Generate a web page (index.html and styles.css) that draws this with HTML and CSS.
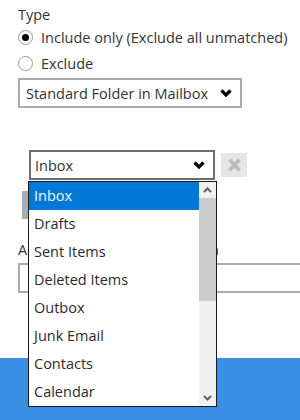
FILE: index.html
```html
<!DOCTYPE html>
<html>
<head>
<meta charset="utf-8">
<link rel="stylesheet" href="styles.css">
</head>
<body>
<div class="page">
  <div class="label">Type</div>
  <div class="radio-row"><span class="radio checked"></span><span>Include only (Exclude all unmatched)</span></div>
  <div class="radio-row"><span class="radio"></span><span>Exclude</span></div>
  <div class="select wide">
    <span>Standard Folder in Mailbox</span>
    <svg class="chev" width="12" height="8" viewBox="0 0 12 8"><polyline points="1.5,1.5 6,6 10.5,1.5" fill="none" stroke="#000" stroke-width="3.2"/></svg>
  </div>
  <div class="folder-row">
    <div class="select folder">
      <span>Inbox</span>
      <svg class="chev" width="12" height="8" viewBox="0 0 12 8"><polyline points="1.5,1.5 6,6 10.5,1.5" fill="none" stroke="#000" stroke-width="3.2"/></svg>
    </div>
    <div class="xbtn">
      <svg width="13" height="14" viewBox="0 0 13 14"><path d="M1.5 1.5 L11.5 12.5 M11.5 1.5 L1.5 12.5" stroke="#bcbcbc" stroke-width="3.8"/></svg>
    </div>
  </div>
  <div class="addbtn"></div>
  <div class="label name-label">Add another folder or pattern</div>
  <div class="input"></div>
</div>
<div class="footer"></div>

<div class="dropdown">
  <ul class="options">
    <li class="selected">Inbox</li>
    <li>Drafts</li>
    <li>Sent Items</li>
    <li>Deleted Items</li>
    <li>Outbox</li>
    <li>Junk Email</li>
    <li>Contacts</li>
    <li>Calendar</li>
  </ul>
  <div class="scrollbar">
    <div class="arrow"><svg width="9" height="6" viewBox="0 0 9 6"><polyline points="1,5 4.5,1.5 8,5" fill="none" stroke="#606060" stroke-width="2"/></svg></div>
    <div class="track"><div class="thumb"></div></div>
    <div class="arrow"><svg width="9" height="6" viewBox="0 0 9 6"><polyline points="1,1 4.5,4.5 8,1" fill="none" stroke="#606060" stroke-width="2"/></svg></div>
  </div>
</div>
</body>
</html>
```
FILE: styles.css
```css
html, body {
  margin: 0;
  padding: 0;
  background: #fff;
}
body {
  width: 300px;
  height: 420px;
  overflow: hidden;
  position: relative;
  font-family: "Open Sans", sans-serif;
  font-size: 14.5px;
  color: #333;
}
.page {
  padding: 5px 0 0 18px;
  height: 353px;
}
.label {
  line-height: 19px;
}
.radio-row {
  display: flex;
  align-items: center;
  gap: 8px;
  height: 26px;
}
.radio {
  width: 13px;
  height: 13px;
  border: 1px solid #999;
  border-radius: 50%;
  display: flex;
  align-items: center;
  justify-content: center;
  box-sizing: content-box;
}
.radio.checked::after {
  content: "";
  width: 7px;
  height: 7px;
  border-radius: 50%;
  background: #000;
}
.select {
  display: flex;
  align-items: center;
  justify-content: space-between;
  box-sizing: border-box;
  background: #fff;
}
.select.wide {
  margin-top: 2px;
  width: 224px;
  height: 30px;
  border: 2px solid #acacac;
  padding: 0 8px 0 6px;
}
.folder-row {
  display: flex;
  align-items: center;
  gap: 6px;
  margin: 42px 0 0 11px;
}
.select.folder {
  width: 186px;
  height: 30px;
  border: 2px solid #6d6d6d;
  padding: 0 8px 0 4px;
}
.xbtn {
  width: 26px;
  height: 24px;
  background: #e6e6e6;
  display: flex;
  align-items: center;
  justify-content: center;
}
.addbtn {
  margin: 11px 0 0 4px;
  width: 80px;
  height: 28px;
  background: #adadad;
}
.name-label {
  margin-top: 21px;
}
.input {
  margin-top: 4px;
  height: 30px;
  border: 2px solid #acacac;
  border-right: none;
  box-sizing: border-box;
}
.footer {
  height: 62px;
  background: #3a8fe4;
}
.dropdown {
  position: absolute;
  left: 28px;
  top: 181px;
  width: 189px;
  height: 226px;
  box-sizing: border-box;
  border: 1px solid #1a1a1a;
  background: #fff;
  display: flex;
}
.options {
  list-style: none;
  margin: 0;
  padding: 0;
  flex: 1;
}
.options li {
  height: 28px;
  line-height: 28px;
  padding-left: 5px;
  color: #2b2b2b;
}
.options li.selected {
  background: #0078d7;
  color: #f4f8ff;
}
.scrollbar {
  width: 17px;
  background: #f0f0f0;
  display: flex;
  flex-direction: column;
}
.arrow {
  height: 16px;
  display: flex;
  align-items: center;
  justify-content: center;
}
.track {
  flex: 1;
}
.thumb {
  height: 103px;
  background: #cdcdcd;
}
```
